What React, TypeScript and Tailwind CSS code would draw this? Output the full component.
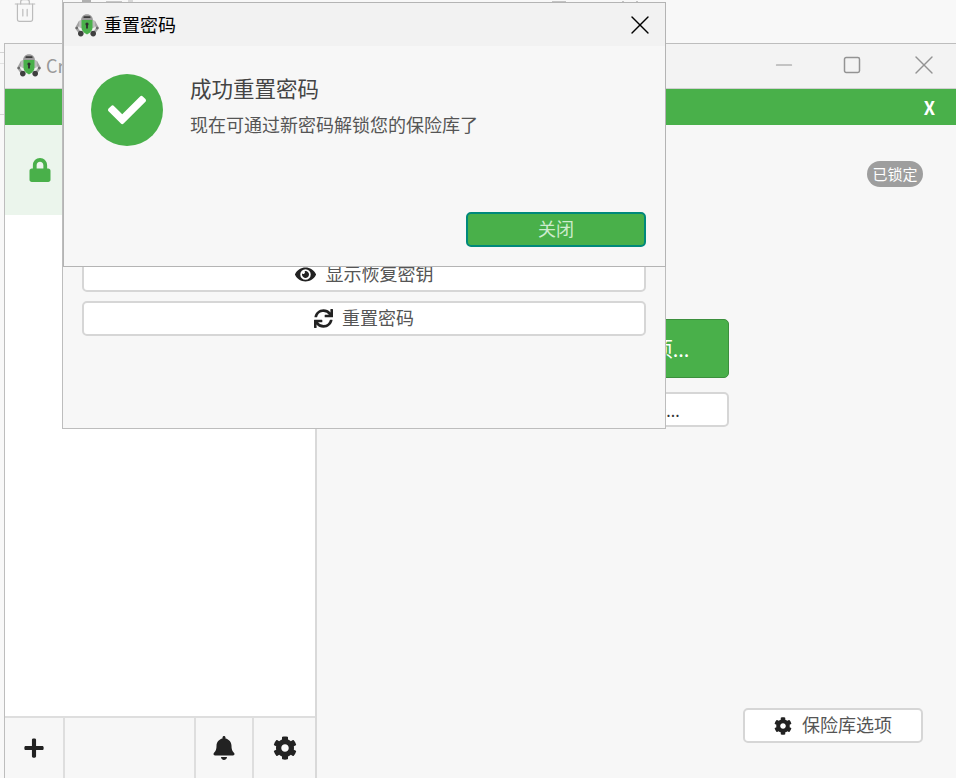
import React from "react";
import { X, Minus, Square, Trash2 } from "lucide-react";
import { FaBell, FaCog, FaEye, FaSync, FaLock, FaPlus, FaCheck } from "react-icons/fa";

const font = "font-['Noto_Sans_CJK_SC','Noto_Sans',sans-serif]";

function Logo({ className }: { className?: string }) {
  return (
    <svg viewBox="0 0 24 24" className={className}>
      <path d="M5 8.500 1.500 15l2.500 3.500" stroke="#a4a4a4" strokeWidth="2.600" fill="none" />
      <path d="M19 8.500 22.500 15 20 18.500" stroke="#a4a4a4" strokeWidth="2.600" fill="none" />
      <circle cx="1.800" cy="15" r="1.300" fill="#6a6a6a" />
      <circle cx="22.200" cy="15" r="1.300" fill="#6a6a6a" />
      <circle cx="5.800" cy="20.600" r="2.800" fill="#3f3f3f" />
      <circle cx="18.200" cy="20.600" r="2.800" fill="#3f3f3f" />
      <path d="M6 8C6 3.500 8.500 1.200 12 1.200S18 3.500 18 8z" fill="#9a9a9a" />
      <rect x="8.500" y="3.300" width="7" height="1.800" rx=".6" fill="#3a3a3a" />
      <rect x="4" y="7" width="16" height="8" rx="2" fill="#bcbcbc" />
      <path d="M6.500 7h11v7.500c0 3.200-2.600 5.300-5.500 7-2.900-1.700-5.500-3.800-5.500-7z" fill="#49b04a" />
      <circle cx="12" cy="11" r="1.600" fill="#2f2f2f" />
      <rect x="11.100" y="11.500" width="1.800" height="4" fill="#2f2f2f" />
    </svg>
  );
}

export default function App() {
  return (
    <div className={`relative w-[956px] h-[778px] overflow-hidden bg-[#f8f8f8] text-[#333] ${font}`}>
      {/* window behind everything */}
      <Trash2 className="absolute left-[12px] top-[-3px] w-[26px] h-[27px] text-[#bcbcbc]" strokeWidth={1.100} />
      <div className="absolute left-0 top-[52px] w-[5px] h-px bg-[#d4d4d4]" />
      <div className="absolute left-0 top-[63px] w-[5px] h-px bg-[#e2e2e2]" />
      <div className="absolute left-0 top-[114px] w-[5px] h-px bg-[#d4d4d4]" />
      <div className="absolute left-[62px] top-0 w-px h-[3px] bg-[#bdbdbd]" />
      <div className="absolute left-[82px] top-0 w-[9px] h-[2px] bg-[#b0b0b0]" />
      <div className="absolute left-[106px] top-px w-[16px] h-px bg-[#c8c8c8]" />
      <div className="absolute left-[128px] top-0 w-[5px] h-[2px] bg-[#d8d8d8]" />
      <div className="absolute left-[552px] top-px w-[14px] h-px bg-[#c4c4c4]" />
      <div className="absolute left-[622px] top-px w-[2px] h-px bg-[#c4c4c4]" />
      <div className="absolute left-[636px] top-px w-[2px] h-px bg-[#c4c4c4]" />

      {/* main window */}
      <div className="absolute left-[4px] top-[43px] w-[952px] h-[735px] flex flex-col bg-[#f7f7f7] border-l border-t border-[#bdbdbd]">
        <div className="h-[45px] shrink-0 flex items-center bg-[#f3f3f3] border-b border-[#d0d0d0]">
          <Logo className="ml-[12px] w-6 h-6 mb-[2px]" />
          <span className="ml-[5px] text-[18px] text-[#999] mb-[2px]">Cryptomator</span>
          <div className="ml-auto flex items-center text-[#939393] mb-[2px]">
            <Minus className="w-[26px] h-[26px] mr-[45px]" strokeWidth={1} />
            <Square className="w-[20px] h-[20px] mr-[46px]" strokeWidth={1.800} />
            <X className="w-[32px] h-[32px] mr-[16px]" strokeWidth={1} />
          </div>
        </div>
        <div className="h-[36px] shrink-0 flex items-center justify-end bg-[#49b04a] pr-[21px] text-white font-bold text-[18px]">X</div>
        <div className="flex-1 flex min-h-0">
          <div className="w-[310px] shrink-0 flex flex-col bg-white border-r-2 border-[#d9d9d9] box-content">
            <div className="h-[90px] shrink-0 flex items-center pl-[24px] bg-[#ebf5ec]">
              <FaLock className="w-[22px] h-[24px] text-[#49b04a]" />
            </div>
            <div className="flex-1" />
            <div className="h-[62px] shrink-0 flex bg-[#f7f7f7] border-t-2 border-[#dedede] text-[#222]">
              <div className="w-[60px] flex items-center justify-center border-r-2 border-[#dedede]"><FaPlus className="w-[22px] h-[22px]" /></div>
              <div className="flex-1 border-r-2 border-[#dedede]" />
              <div className="w-[58px] flex items-center justify-center border-r-2 border-[#dedede]"><FaBell className="w-[22px] h-[24px]" /></div>
              <div className="w-[61px] flex items-center justify-center"><FaCog className="w-[24px] h-[24px]" /></div>
            </div>
          </div>
          <div className="flex-1 flex flex-col items-end pr-[33px] pt-[36px]">
            <div className="w-[56px] h-[26px] rounded-full bg-[#9e9e9e] text-white text-[15px] flex items-center justify-center">已锁定</div>
            <div className="mt-[132px] mr-[194px] w-[176px] h-[59px] rounded-[5px] bg-[#49b04a] border border-[#3c8f3d] text-white text-[20px] flex items-center justify-center">解锁选项...</div>
            <div className="mt-[14px] mr-[194px] w-[176px] h-[35px] rounded-[5px] bg-white border-2 border-[#d6d6d6] text-[16px] flex items-center justify-center">显示详情...</div>
            <div className="mt-auto mb-[35px] w-[180px] h-[35px] rounded-[5px] bg-white border-2 border-[#d6d6d6] text-[18px] flex items-center justify-center gap-[10px] text-[#555]">
              <FaCog className="w-[18px] h-[18px] text-[#222]" /><span className="mb-[2px]">保险库选项</span>
            </div>
          </div>
        </div>
      </div>

      {/* options dialog */}
      <div className="absolute left-[62px] top-[2px] w-[604px] h-[427px] flex flex-col justify-end gap-[9px] px-[19px] pb-[92px] bg-[#f7f7f7] border border-[#bdbdbd]">
        <div className="h-[35px] rounded-[5px] bg-white border-2 border-[#d6d6d6] text-[18px] flex items-center justify-center gap-[10px] text-[#555]">
          <FaEye className="w-[21px] h-[21px] text-[#222]" /><span className="mb-[2px]">显示恢复密钥</span>
        </div>
        <div className="h-[35px] rounded-[5px] bg-white border-2 border-[#d6d6d6] text-[18px] flex items-center justify-center gap-[9px] text-[#555]">
          <FaSync className="w-[19px] h-[19px] text-[#222]" /><span className="mb-[2px]">重置密码</span>
        </div>
      </div>

      {/* success dialog */}
      <div className="absolute left-[63px] top-[2px] w-[603px] h-[265px] flex flex-col bg-[#f7f7f7] border border-[#b4b4b4]">
        <div className="h-[43px] shrink-0 flex items-center bg-[#f2f2f2]">
          <Logo className="ml-[11px] w-6 h-6" />
          <span className="ml-[5px] text-[18px] text-black">重置密码</span>
          <X className="ml-auto mr-[9px] w-[32px] h-[32px] text-black" strokeWidth={1} />
        </div>
        <div className="flex-1 flex px-[27px] pt-[28px]">
          <div className="w-[72px] h-[72px] rounded-full bg-[#49b04a] flex items-center justify-center shrink-0">
            <FaCheck className="w-[38px] h-[38px] text-white" />
          </div>
          <div className="ml-[27px]">
            <div className="text-[21.500px] leading-[30px] text-[#444] mt-[-1px]">成功重置密码</div>
            <div className="mt-[8px] text-[18px] leading-[26px] text-[#555]">现在可通过新密码解锁您的保险库了</div>
          </div>
        </div>
        <div className="flex justify-end pr-[19px] pb-[19px]">
          <div className="w-[180px] h-[35px] rounded-[5px] bg-[#49b04a] border-2 border-[#00897b] text-[#cdebcd] text-[18px] flex items-center justify-center"><span className="mb-[2px]">关闭</span></div>
        </div>
      </div>
    </div>
  );
}
